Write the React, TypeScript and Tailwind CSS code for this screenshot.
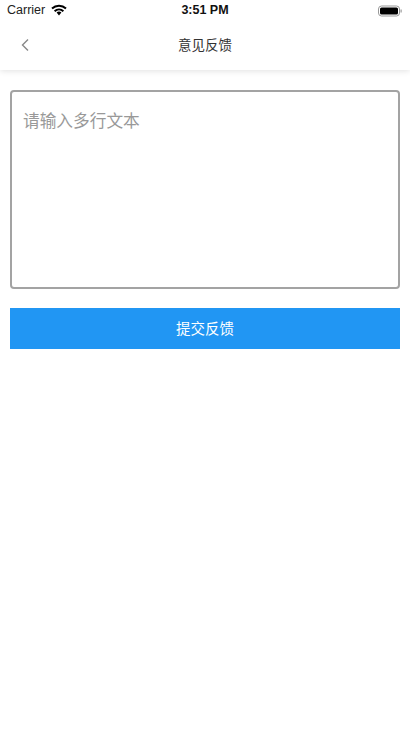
const font = { fontFamily: '"Noto Sans CJK SC", sans-serif' };

function StatusBar() {
  return (
    <div className="relative flex h-[21px] items-center justify-between pl-[7px] pr-[7px] text-[12.5px] text-[#222]" style={{ fontFamily: '"Liberation Sans", sans-serif' }}>
      <div className="flex items-center gap-[6px]">
        <span>Carrier</span>
        <svg width="16" height="12" viewBox="0 0 16 12" className="mb-[2px]">
          <path d="M8 11.5 5.6 8.6a3.6 3.6 0 0 1 4.8 0Z" fill="#000" />
          <path d="M1 4.6a10.2 10.2 0 0 1 14 0" stroke="#000" strokeWidth="2" fill="none" />
          <path d="M3.6 7.2a6.6 6.6 0 0 1 8.8 0" stroke="#000" strokeWidth="2" fill="none" />
        </svg>
      </div>
      <span className="absolute left-0 right-0 text-center font-bold text-[#111]">3:51 PM</span>
      <svg width="25" height="12" viewBox="0 0 25 12">
        <rect x="0.5" y="1" width="21" height="10" rx="3" fill="none" stroke="#999" />
        <rect x="2" y="2.5" width="18" height="7" rx="1.5" fill="#000" />
        <rect x="22.5" y="4.5" width="1.2" height="3" fill="#999" />
      </svg>
    </div>
  );
}

export default function App() {
  return (
    <div className="flex h-[732px] w-[410px] flex-col overflow-hidden bg-white" style={font}>
      <div className="shadow-[0_1px_6px_rgba(0,0,0,0.12)]">
        <StatusBar />
        <div className="relative flex h-[49px] items-center justify-center text-[13.5px] text-[#333]">
          <svg width="10" height="14" viewBox="0 0 10 14" className="absolute left-[20px] top-[17px]">
            <path d="M8 1.5 2.5 7 8 12.5" stroke="#888" strokeWidth="1.4" fill="none" />
          </svg>
          <span className="mb-[3px]">意见反馈</span>
        </div>
      </div>
      <div className="flex flex-col gap-[19px] px-[10px] pt-[20px]">
        <div className="h-[199px] rounded-[4px] border-2 border-[#a3a3a3] px-[11px] py-[16px] text-[16.7px] leading-[24px] text-[#999]">
          请输入多行文本
        </div>
        <button className="flex h-[41px] items-center justify-center bg-[#2196f3] pb-[1px] text-[14.5px] text-white">
          提交反馈
        </button>
      </div>
    </div>
  );
}
